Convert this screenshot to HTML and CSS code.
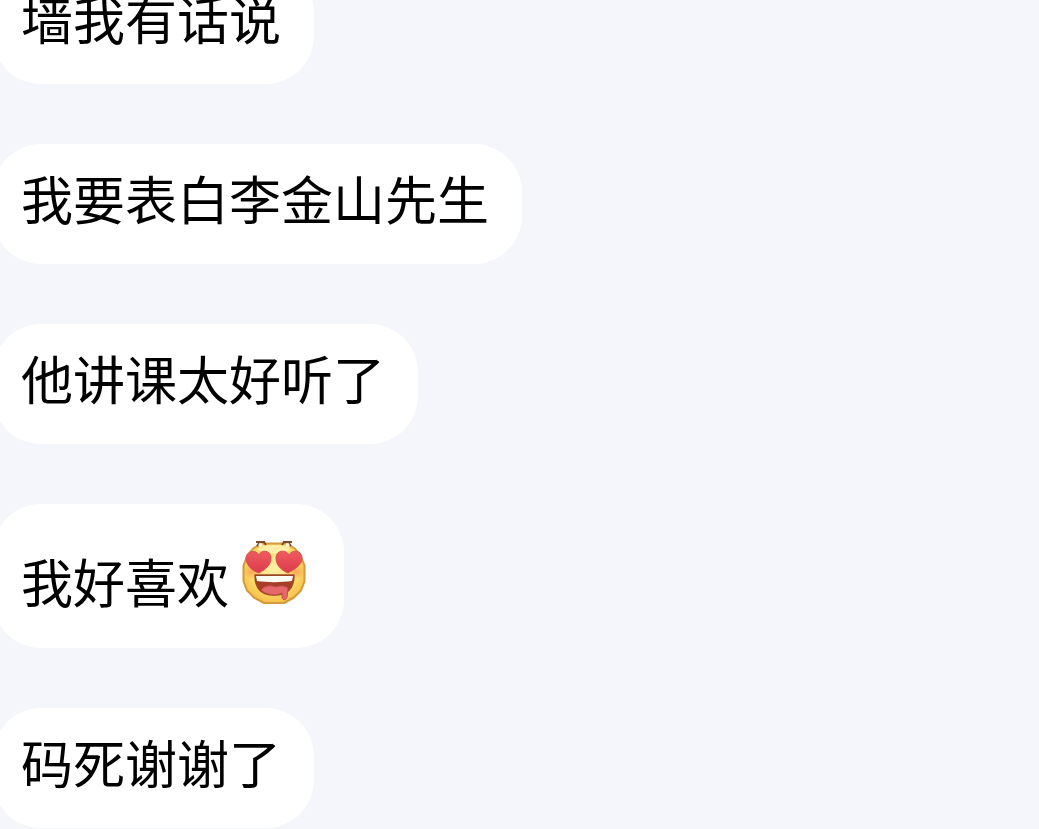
FILE: index.html
```html
<!DOCTYPE html>
<html lang="zh-CN">
<head>
<meta charset="utf-8">
<meta name="viewport" content="width=device-width, initial-scale=1">
<title>聊天</title>
<link rel="stylesheet" href="styles.css">
</head>
<body>
<main class="chat">
  <p class="bubble">墙我有话说</p>
  <p class="bubble">我要表白李金山先生</p>
  <p class="bubble">他讲课太好听了</p>
  <p class="bubble bubble-emoji">
    <span>我好喜欢</span>
    <svg class="emoji" viewBox="0 0 64 64" role="img" aria-label="色">
      <defs>
        <radialGradient id="face" cx="50%" cy="42%" r="58%">
          <stop offset="0" stop-color="#fff0a4"/>
          <stop offset=".6" stop-color="#fddf72"/>
          <stop offset="1" stop-color="#f6c04a"/>
        </radialGradient>
        <linearGradient id="heart" x1="0" y1="0" x2="0" y2="1">
          <stop offset="0" stop-color="#ee5c60"/>
          <stop offset="1" stop-color="#dd3b4c"/>
        </linearGradient>
        <radialGradient id="blush">
          <stop offset="0" stop-color="#f98a4a" stop-opacity=".65"/>
          <stop offset="1" stop-color="#f98a4a" stop-opacity="0"/>
        </radialGradient>
      </defs>
      <path d="M20 2.500h24l9 5 6 8 3.500 9v16l-3.500 9-7 7-10 5.500H22L12 56.500l-7-7-3.500-9v-16L5 15.500l6-8Z" fill="url(#face)" stroke="#d49a3c" stroke-width="2" stroke-linejoin="round"/>
      <path d="M14 1h9M41 1h9M15 5l3-4M49 5l-3-4M22 1l2 3M42 1l-2 3" fill="none" stroke="#7b4c28" stroke-width="2"/>
      <circle cx="18.500" cy="4" r="2" fill="#fff3e0"/>
      <circle cx="45.500" cy="4" r="2" fill="#fff3e0"/>
      <ellipse cx="32" cy="8" rx="16" ry="4" fill="#fff5bd" opacity=".7"/>
      <ellipse cx="10" cy="31" rx="9" ry="7" fill="url(#blush)"/>
      <ellipse cx="54" cy="31" rx="9" ry="7" fill="url(#blush)"/>
      <path d="M17 14C19 8 29 9 29 17c0 7-5 11-12 15C10 30 4 24 4 17c0-7 10-9 13-3Z" fill="url(#heart)" stroke="#d7524c"/>
      <path d="M47 14c-3-6-13-5-13 3 0 7 5 12 12 15 7-4 14-8 14-15 0-8-10-9-13-3Z" fill="url(#heart)" stroke="#d7524c"/>
      <path d="M13 34h39c0 13-7 20-20 20S13 47 13 34Z" fill="#a63f28" stroke="#9b4a24" stroke-width="1.500" stroke-linejoin="round"/>
      <path d="M14 35h37l-1 5c-11 1.500-25 1.500-35 0Z" fill="#fffdf3"/>
      <path d="M19 49c5-6 11-4 15-3 5-2 9-1 12 1l-1 9c-1 4-5 3-5 0v-4c-6 3-16 2-21-3Z" fill="#e5686a" stroke="#c94b4b"/>
    </svg>
  </p>
  <p class="bubble">码死谢谢了</p>
</main>
</body>
</html>
```
FILE: styles.css
```css
body {
  margin: 0;
  background: #f5f6fb;
  color: #000;
  font-family: "Noto Sans CJK SC", sans-serif;
  overflow: hidden;
}

/* The thread is scrolled, so the first message is partly above the window. */
.chat {
  display: flex;
  flex-direction: column;
  align-items: flex-start;
  gap: 60px;
  margin-top: -36px;
  margin-left: -7px;
}

.bubble {
  margin: 0;
  padding: 22px 33px 34px 28px;
  border-radius: 48px;
  background: #fff;
  font-size: 52px;
  line-height: 64px;
}

.bubble-emoji {
  display: flex;
  align-items: flex-end;
  gap: 13px;
  padding-top: 37px;
  padding-bottom: 35px;
}

.emoji {
  width: 64px;
  height: 64px;
  margin-right: 5px;
  margin-bottom: 8px;
}
```
